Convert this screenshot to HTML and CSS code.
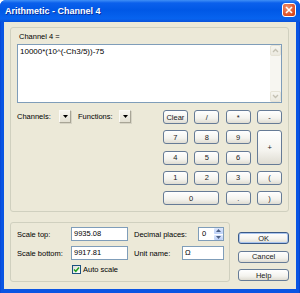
FILE: index.html
```html
<!DOCTYPE html>
<html lang="en">
<head>
    <meta charset="UTF-8">
    <title>Arithmetic - Channel 4</title>
    <link rel="stylesheet" href="styles.css">
</head>
<body>
    <div class="window">
        <div class="titlebar">
            <span class="title">Arithmetic - Channel 4</span>
            <span class="close">
                <svg width="8" height="8" viewBox="0 0 8 8"><path d="M1 1L7 7M7 1L1 7" stroke="#fff" stroke-width="1.6"/></svg>
            </span>
        </div>
        <div class="client">
            <div class="group expr">
                <div class="caption">Channel 4 =</div>
                <div class="editor">
                    <div class="formula">10000*(10^(-Ch3/5))-75</div>
                    <div class="vscroll">
                        <span class="sarrow"><svg width="7" height="5" viewBox="0 0 7 5"><path d="M1 4L3.5 1.5L6 4" fill="none" stroke="#c3c0b2" stroke-width="1.3"/></svg></span>
                        <span class="track"></span>
                        <span class="sarrow"><svg width="7" height="5" viewBox="0 0 7 5"><path d="M1 1L3.5 3.5L6 1" fill="none" stroke="#c3c0b2" stroke-width="1.3"/></svg></span>
                    </div>
                </div>
                <div class="tools">
                    <div class="pickers">
                        <span class="plabel first">Channels:</span>
                        <span class="drop"><svg width="5" height="3" viewBox="0 0 5 3"><path d="M0 0H5L2.5 3Z" fill="#000"/></svg></span>
                        <span class="plabel second">Functions:</span>
                        <span class="drop"><svg width="5" height="3" viewBox="0 0 5 3"><path d="M0 0H5L2.5 3Z" fill="#000"/></svg></span>
                    </div>
                    <div class="keypad">
                        <button class="key">Clear</button>
                        <button class="key">/</button>
                        <button class="key">*</button>
                        <button class="key">-</button>
                        <button class="key">7</button>
                        <button class="key">8</button>
                        <button class="key">9</button>
                        <button class="key plus">+</button>
                        <button class="key">4</button>
                        <button class="key">5</button>
                        <button class="key">6</button>
                        <button class="key">1</button>
                        <button class="key">2</button>
                        <button class="key">3</button>
                        <button class="key">(</button>
                        <button class="key zero">0</button>
                        <button class="key">.</button>
                        <button class="key">)</button>
                    </div>
                </div>
            </div>
            <div class="lower">
                <div class="group scale">
                    <div class="row">
                        <span class="lbl">Scale top:</span>
                        <span class="field num">9935.08</span>
                        <span class="lbl2 wide">Decimal places:</span>
                        <span class="field spin">0
                            <span class="spinbtns">
                                <span class="sb"><svg width="5" height="3" viewBox="0 0 5 3"><path d="M0 3H5L2.5 0Z" fill="#4d6185"/></svg></span>
                                <span class="sb"><svg width="5" height="3" viewBox="0 0 5 3"><path d="M0 0H5L2.5 3Z" fill="#4d6185"/></svg></span>
                            </span>
                        </span>
                    </div>
                    <div class="row">
                        <span class="lbl">Scale bottom:</span>
                        <span class="field num">9917.81</span>
                        <span class="lbl2">Unit name:</span>
                        <span class="field unit">Ω</span>
                    </div>
                    <div class="row check-row">
                        <span class="check"><svg width="7" height="7" viewBox="0 0 7 7"><path d="M1 3.5L2.8 5.3L6 1.6" fill="none" stroke="#21a121" stroke-width="1.5"/></svg></span>
                        <span>Auto scale</span>
                    </div>
                </div>
                <div class="actions">
                    <button class="btn default">OK</button>
                    <button class="btn">Cancel</button>
                    <button class="btn">Help</button>
                </div>
            </div>
        </div>
    </div>
</body>
</html>
```

FILE: styles.css
```css
* { box-sizing: border-box; }
body {
    margin: 0;
    font-family: 'Liberation Sans', Arial, sans-serif;
    font-size: 7.5px;
    color: #000;
    background: #fff;
}
.window {
    width: 300px;
    height: 293px;
    display: flex;
    flex-direction: column;
    background: linear-gradient(90deg, #0841d0 0, #0a55e3 1px, #0a55e3 299px, #0535b8 300px);
    border-radius: 6px 6px 0 0;
    overflow: hidden;
}
.titlebar {
    height: 22px;
    flex: none;
    display: flex;
    align-items: flex-start;
    padding: 0 4px 0 5px;
    background: linear-gradient(#3f8ff6 0, #0b60ec 3px, #0058e6 45%, #0763ef 85%, #0a52da 100%);
}
.title {
    flex: 1;
    margin-top: 6px;
    color: #fff;
    font-weight: bold;
    font-size: 9px;
    line-height: 10px;
    text-shadow: 1px 1px 0 #0a2f9b;
}
.close {
    width: 14px;
    height: 14px;
    margin-top: 3px;
    border: 1px solid #fff;
    border-radius: 3px;
    background: radial-gradient(circle at 35% 30%, #f0906c, #dd4e24 70%, #c43c14);
    display: flex;
    align-items: center;
    justify-content: center;
}
.client {
    flex: 1;
    margin: 0 4px 4px 4px;
    background: #ece9d8;
    padding: 5px 7px 0 6px;
    display: flex;
    flex-direction: column;
}
.group {
    border: 1px solid #d0d0bf;
    border-radius: 3px;
}
.expr {
    height: 185px;
    padding: 4px 6px 0 6px;
}
.caption {
    height: 9px;
    line-height: 9px;
    padding-left: 2px;
}
.editor {
    margin-top: 3px;
    height: 59px;
    border: 1px solid #7f9db9;
    background: #fff;
    display: flex;
}
.formula {
    flex: 1;
    padding: 2px 2px 0 2px;
    font-size: 8px;
    line-height: 10px;
}
.vscroll {
    width: 11px;
    display: flex;
    flex-direction: column;
    background: #f7f6f1;
}
.sarrow {
    height: 11px;
    display: flex;
    align-items: center;
    justify-content: center;
    background: linear-gradient(#f6f5ef, #ebe9df);
    border: 1px solid #e6e3d6;
    border-radius: 2px;
}
.track { flex: 1; }
.tools {
    display: flex;
    margin-top: 7px;
}
.pickers {
    display: flex;
    align-items: center;
    height: 13px;
}
.plabel.first { width: 42px; }
.plabel.second { width: 41px; margin-left: 7px; }
.drop {
    width: 12px;
    height: 13px;
    display: flex;
    align-items: center;
    justify-content: center;
    background: linear-gradient(#f7f6f1, #e3e0d2);
    border: 1px solid;
    border-color: #fbfaf6 #a8a596 #a8a596 #fbfaf6;
    box-shadow: 1px 1px 0 #d6d3c4;
}
.keypad {
    margin-left: auto;
    width: 119px;
    display: grid;
    grid-template-columns: repeat(4, 1fr);
    grid-template-rows: repeat(5, 14px);
    gap: 6.25px 6.67px;
}
.key, .btn {
    font: inherit;
    color: #1a1a1a;
    padding: 0;
    border: 1px solid #667b96;
    border-radius: 3px;
    background: linear-gradient(#ffffff, #f4f3ee 60%, #dfdcd2);
}
.plus { grid-row: span 2; }
.zero { grid-column: span 2; }
.lower {
    display: flex;
    margin-top: 10px;
}
.scale {
    width: 221px;
    height: 60px;
    padding: 4px 0 0 6px;
}
.row {
    display: flex;
    align-items: center;
    height: 14px;
}
.row + .row { margin-top: 5px; }
.lbl { width: 54px; }
.lbl2 { width: 48px; margin-left: 6px; }
.lbl2.wide { width: 64px; }
.field {
    height: 14px;
    border: 1px solid #7f9db9;
    background: #fff;
    padding-left: 2px;
    line-height: 12px;
    display: flex;
    align-items: center;
}
.num { width: 57px; }
.unit { width: 42px; }
.spin {
    width: 26px;
    padding-left: 3px;
    justify-content: space-between;
}
.spinbtns {
    width: 9px;
    height: 12px;
    display: flex;
    flex-direction: column;
    gap: 1px;
}
.sb {
    flex: 1;
    display: flex;
    align-items: center;
    justify-content: center;
    background: linear-gradient(#dce6fb, #bcd0f7);
    border-radius: 1px;
}
.check-row {
    height: 10px;
    margin-top: 4px !important;
}
.check {
    width: 9px;
    height: 9px;
    margin-left: 55px;
    margin-right: 2px;
    border: 1px solid #1c5180;
    background: linear-gradient(135deg, #dcdcd7, #fff);
    display: flex;
    align-items: center;
    justify-content: center;
}
.actions {
    width: 51px;
    margin-left: 8px;
    padding-top: 10px;
    display: flex;
    flex-direction: column;
    gap: 6.5px;
}
.btn { height: 12px; }
.btn.default {
    border-color: #3a5a88;
    box-shadow: inset 0 0 0 1px #a9c4ee;
}
```
